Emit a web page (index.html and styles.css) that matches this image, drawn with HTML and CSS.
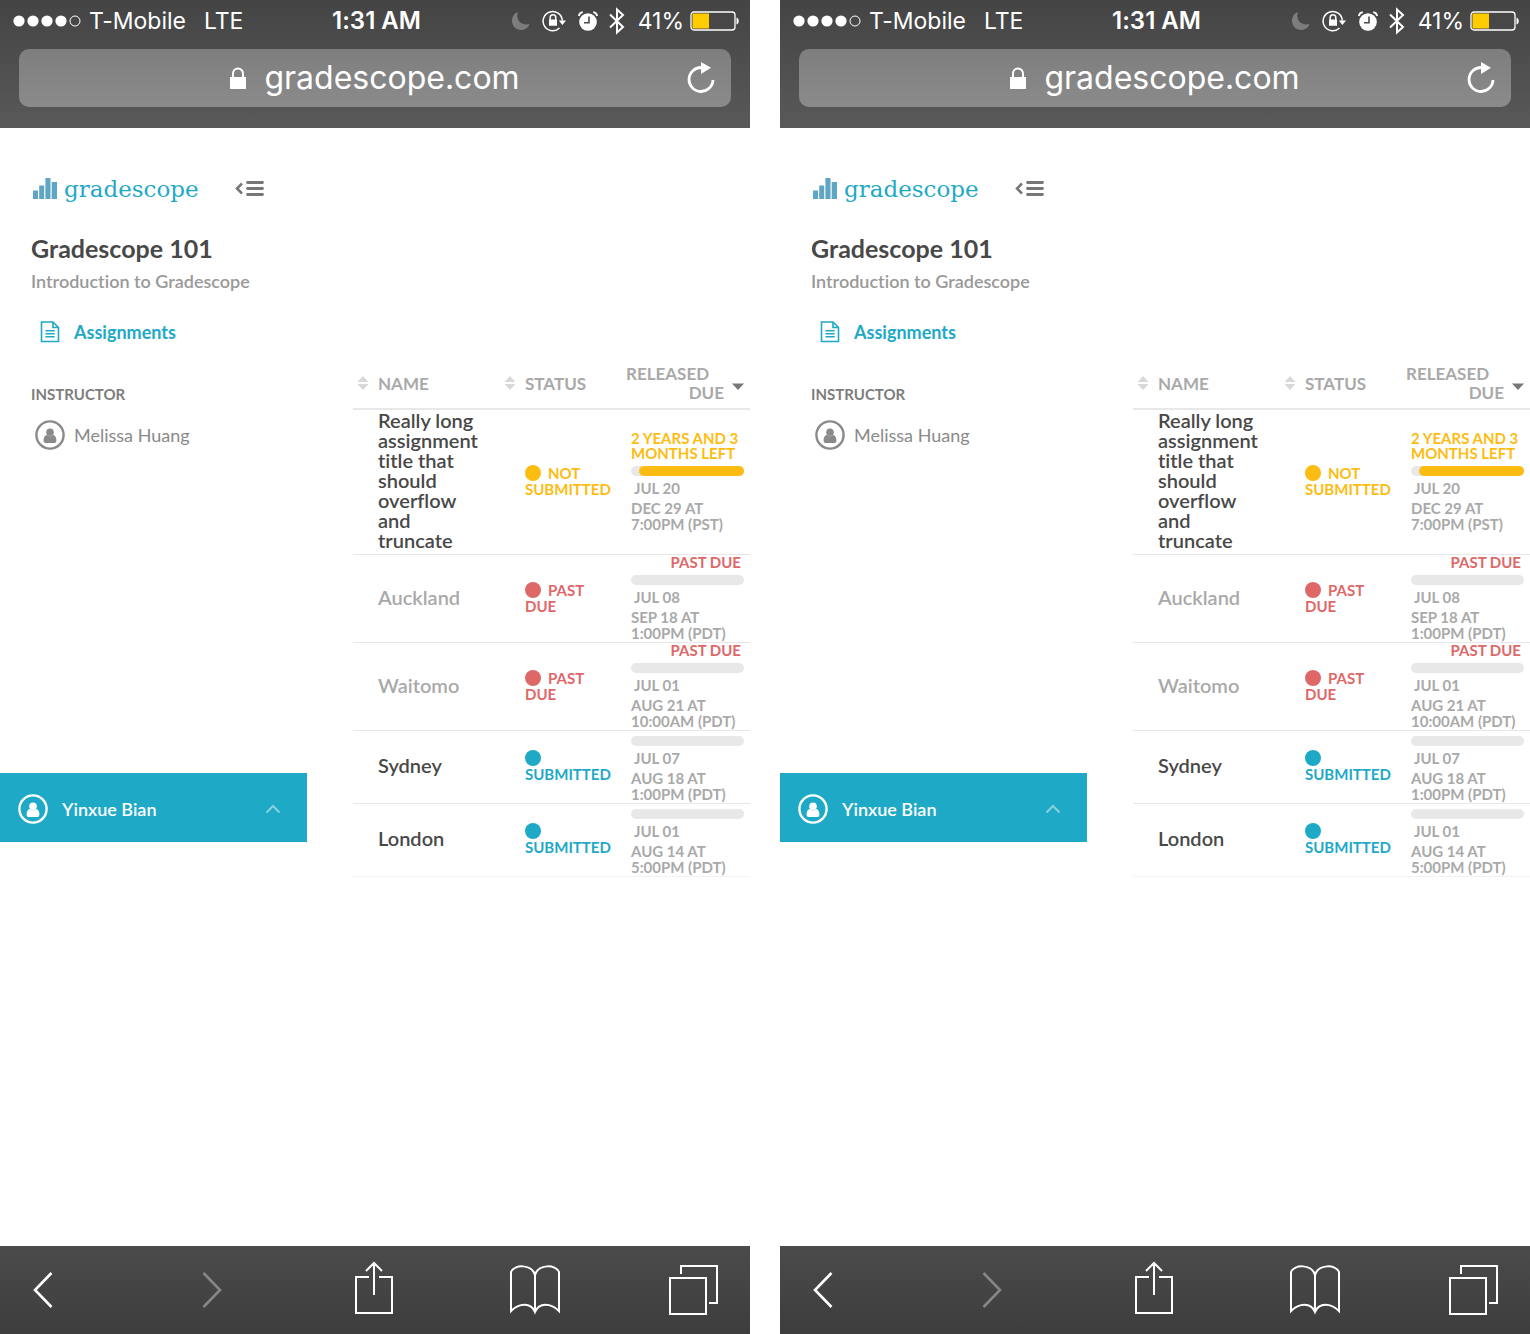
FILE: index.html
```html
<!DOCTYPE html>
<html lang="en">
<head>
<meta charset="utf-8">
<meta name="viewport" content="width=device-width, initial-scale=1">
<title>Gradescope 101</title>
<link rel="stylesheet" href="styles.css">
</head>
<body>
<svg class="sprite" aria-hidden="true">
  <symbol id="signal" viewBox="0 0 68 12"><g fill="#fff"><circle cx="6" cy="6" r="5.6"/><circle cx="20" cy="6" r="5.6"/><circle cx="34" cy="6" r="5.6"/><circle cx="48" cy="6" r="5.6"/></g><circle cx="62" cy="6" r="5" fill="none" stroke="#fff"/></symbol>
  <symbol id="moon" viewBox="0 0 20 20"><path d="M7 1C2.500 2.500 1 6.500 1 10c0 5 4 9 9 9 4 0 7.500-2.500 8.500-6C11 15 4 9.500 7 1z" fill="#7d7d7d"/></symbol>
  <symbol id="rotation" viewBox="0 0 24 22"><g fill="none" stroke="#fff" stroke-width="1.500"><path d="M17.500 18A9.600 9.600 0 1 1 20.300 10.500"/><path d="M8.200 10V7.500a2.800 2.800 0 0 1 5.600 0V10"/></g><path d="M7 9.500h8v6.300H7zM16.800 10.500h7.200l-3.600 4.500z" fill="#fff"/></symbol>
  <symbol id="alarm" viewBox="0 0 20 20"><circle cx="10" cy="11" r="8.800" fill="#fff"/><path d="M11 5.500v6.300H6" fill="none" stroke="#4a4a4a" stroke-width="1.600"/><path d="M.8 5a5 5 0 0 1 4-3.800M15.200 1.200a5 5 0 0 1 4 3.800" fill="none" stroke="#fff" stroke-width="1.800"/></symbol>
  <symbol id="bluetooth" viewBox="0 0 16 28"><path d="M1 7.500l13 12.500-6 5.500V2.500L14 8 1 20.500" fill="none" stroke="#fff" stroke-width="2"/></symbol>
  <symbol id="battery" viewBox="0 0 50 20"><rect x="1" y="1" width="44" height="18" rx="3" fill="none" stroke="#fff" stroke-width="1.300"/><path d="M2.500 2.500H19v15H2.500z" fill="#fc0"/><path d="M46.500 6.500c3 1 3 6 0 7z" fill="#fff"/></symbol>
  <symbol id="lock" viewBox="0 0 16 22"><path d="M0 10h16v12H0z" fill="#fff"/><path d="M3 11V6.500a5 5 0 0 1 10 0V11" fill="none" stroke="#fff" stroke-width="2"/></symbol>
  <symbol id="reload" viewBox="0 0 28 32"><path d="M14.500 5.500A12 12 0 1 0 26 18" fill="none" stroke="#fff" stroke-width="2.800"/><path d="M14 0l10 5.800L14 12z" fill="#fff"/></symbol>
  <symbol id="bars" viewBox="0 0 24 22"><path d="M0 12.500h5v8.500H0zM6.200 7.500h5V21h-5zM12.400 0h5.100v21h-5.100zM18.700 4H24v17h-5.300z" fill="#5ea6c4"/></symbol>
  <symbol id="collapse" viewBox="0 0 30 16"><path d="M7 2.500L2 7.500l5 5" fill="none" stroke="#777" stroke-width="2.500"/><path d="M12.500 1.500h15M12.500 7.500h15M12.500 13.500h15" stroke="#777" stroke-width="2.800" stroke-linecap="round"/></symbol>
  <symbol id="document" viewBox="0 0 20 22"><g fill="none" stroke="#1ea9c6" stroke-width="1.600"><path d="M1.500 1H13l5.500 5.500v14h-17z"/><path d="M13 1v5.500h5.500M5.500 9.700h9.200M5.500 12.700h9.200M5.500 15.700h9.200"/></g></symbol>
  <symbol id="person" viewBox="0 0 30 30"><circle cx="15" cy="15" r="13.600" fill="none" stroke="currentColor" stroke-width="2.400"/><circle cx="15" cy="12.200" r="3.800" fill="currentColor"/><path d="M8.600 20.500c0-4 2-5.500 3.500-5.500 2 1.600 4 1.600 5.800 0 1.500 0 3.500 1.500 3.500 5.500 0 1.700-.8 2.500-2 2.500h-8.800c-1.200 0-2-.8-2-2.500z" fill="currentColor"/></symbol>
  <symbol id="up" viewBox="0 0 16 10"><path d="M1.500 8.500L8 2l6.500 6.500" fill="none" stroke="#8bd0df" stroke-width="2"/></symbol>
  <symbol id="sort" viewBox="0 0 12 14"><path d="M.5 6L6 0l5.500 6zM.5 8h11L6 14z" fill="#d8d8d8"/></symbol>
  <symbol id="sorted" viewBox="0 0 12 8"><path d="M0 .5h12L6 7z" fill="#777"/></symbol>
  <symbol id="back" viewBox="0 0 20 38"><path d="M18.500 2L2 19l16.500 17" fill="none" stroke="currentColor" stroke-width="2.600"/></symbol>
  <symbol id="forward" viewBox="0 0 20 38"><path d="M1.500 2L18 19 1.500 36" fill="none" stroke="currentColor" stroke-width="2.600"/></symbol>
  <symbol id="share" viewBox="0 0 38 60"><path d="M14 17H1v36h36V17H24M19 35V3M11 11l8-8 8 8" fill="none" stroke="#fff" stroke-width="2"/></symbol>
  <symbol id="book" viewBox="0 0 50 50"><path d="M25 47V10C22-1 4-1 1 7v39c8-8 20-9 24 1 4-10 16-9 24-1V7C46-1 28-1 25 10" fill="none" stroke="#fff" stroke-width="2"/></symbol>
  <symbol id="tabs" viewBox="0 0 50 50"><path d="M1 13h36v36H1zM12 9V1h36v37h-8" fill="none" stroke="#fff" stroke-width="2"/></symbol>
</svg>
<main class="gallery">
  <section class="phone">
    <header class="chrome">
      <div class="status-bar">
        <div class="carrier"><svg class="i-signal"><use href="#signal"/></svg><span>T-Mobile</span><span class="network">LTE</span></div>
        <time class="clock">1:31 AM</time>
        <div class="indicators"><svg class="i-moon"><use href="#moon"/></svg><svg class="i-rotation"><use href="#rotation"/></svg><svg class="i-alarm"><use href="#alarm"/></svg><svg class="i-bluetooth"><use href="#bluetooth"/></svg><span class="charge">41%</span><svg class="i-battery"><use href="#battery"/></svg></div>
      </div>
      <div class="address"><span class="site"><svg class="i-lock"><use href="#lock"/></svg>gradescope.com</span><button class="reload" type="button" aria-label="Reload"><svg class="i-reload"><use href="#reload"/></svg></button></div>
    </header>
    <div class="page">
      <aside class="sidebar">
        <div class="course">
          <div class="brand"><a class="logo" href="#"><svg class="i-bars"><use href="#bars"/></svg>gradescope</a><button type="button" aria-label="Collapse menu"><svg class="i-collapse"><use href="#collapse"/></svg></button></div>
          <h1>Gradescope 101</h1>
          <p class="subtitle">Introduction to Gradescope</p>
          <nav><a class="nav-link" href="#"><svg class="i-document"><use href="#document"/></svg>Assignments</a></nav>
          <h2>INSTRUCTOR</h2>
          <p class="instructor"><svg class="i-person"><use href="#person"/></svg>Melissa Huang</p>
        </div>
        <button class="account" type="button"><svg class="i-person"><use href="#person"/></svg><span>Yinxue Bian</span><svg class="i-up"><use href="#up"/></svg></button>
      </aside>
      <table class="assignments">
        <colgroup><col class="col-name"><col class="col-status"><col></colgroup>
        <thead><tr>
          <th scope="col"><span class="heading"><svg class="i-sort"><use href="#sort"/></svg>NAME</span></th>
          <th scope="col"><span class="heading"><svg class="i-sort"><use href="#sort"/></svg>STATUS</span></th>
          <th scope="col"><span class="released">RELEASED</span><span class="due">DUE<svg class="i-sorted"><use href="#sorted"/></svg></span></th>
        </tr></thead>
        <tbody>
          <tr class="open"><th scope="row">Really long assignment title that should overflow and truncate</th><td class="state pending"><i class="dot"></i>NOT SUBMITTED</td><td class="dates"><p class="left">2 YEARS AND 3 MONTHS LEFT</p><div class="track"><div class="fill"></div></div><p class="start">JUL 20</p><p>DEC 29 AT 7:00PM (PST)</p></td></tr>
          <tr class="closed"><th scope="row">Auckland</th><td class="state late"><i class="dot"></i>PAST DUE</td><td class="dates"><p class="over">PAST DUE</p><div class="track"></div><p class="start">JUL 08</p><p>SEP 18 AT 1:00PM (PDT)</p></td></tr>
          <tr class="closed"><th scope="row">Waitomo</th><td class="state late"><i class="dot"></i>PAST DUE</td><td class="dates"><p class="over">PAST DUE</p><div class="track"></div><p class="start">JUL 01</p><p>AUG 21 AT 10:00AM (PDT)</p></td></tr>
          <tr><th scope="row">Sydney</th><td class="state done"><i class="dot"></i>SUBMITTED</td><td class="dates"><div class="track"></div><p class="start">JUL 07</p><p>AUG 18 AT 1:00PM (PDT)</p></td></tr>
          <tr><th scope="row">London</th><td class="state done"><i class="dot"></i>SUBMITTED</td><td class="dates"><div class="track"></div><p class="start">JUL 01</p><p>AUG 14 AT 5:00PM (PDT)</p></td></tr>
        </tbody>
      </table>
    </div>
    <footer class="toolbar">
      <button type="button" aria-label="Back"><svg class="i-arrow"><use href="#back"/></svg></button>
      <button class="forward" type="button" aria-label="Forward" disabled><svg class="i-arrow"><use href="#forward"/></svg></button>
      <button class="share" type="button" aria-label="Share"><svg class="i-share"><use href="#share"/></svg></button>
      <button type="button" aria-label="Bookmarks"><svg class="i-tool"><use href="#book"/></svg></button>
      <button type="button" aria-label="Tabs"><svg class="i-tool"><use href="#tabs"/></svg></button>
    </footer>
  </section>
  <section class="phone">
    <header class="chrome">
      <div class="status-bar">
        <div class="carrier"><svg class="i-signal"><use href="#signal"/></svg><span>T-Mobile</span><span class="network">LTE</span></div>
        <time class="clock">1:31 AM</time>
        <div class="indicators"><svg class="i-moon"><use href="#moon"/></svg><svg class="i-rotation"><use href="#rotation"/></svg><svg class="i-alarm"><use href="#alarm"/></svg><svg class="i-bluetooth"><use href="#bluetooth"/></svg><span class="charge">41%</span><svg class="i-battery"><use href="#battery"/></svg></div>
      </div>
      <div class="address"><span class="site"><svg class="i-lock"><use href="#lock"/></svg>gradescope.com</span><button class="reload" type="button" aria-label="Reload"><svg class="i-reload"><use href="#reload"/></svg></button></div>
    </header>
    <div class="page">
      <aside class="sidebar">
        <div class="course">
          <div class="brand"><a class="logo" href="#"><svg class="i-bars"><use href="#bars"/></svg>gradescope</a><button type="button" aria-label="Collapse menu"><svg class="i-collapse"><use href="#collapse"/></svg></button></div>
          <h1>Gradescope 101</h1>
          <p class="subtitle">Introduction to Gradescope</p>
          <nav><a class="nav-link" href="#"><svg class="i-document"><use href="#document"/></svg>Assignments</a></nav>
          <h2>INSTRUCTOR</h2>
          <p class="instructor"><svg class="i-person"><use href="#person"/></svg>Melissa Huang</p>
        </div>
        <button class="account" type="button"><svg class="i-person"><use href="#person"/></svg><span>Yinxue Bian</span><svg class="i-up"><use href="#up"/></svg></button>
      </aside>
      <table class="assignments">
        <colgroup><col class="col-name"><col class="col-status"><col></colgroup>
        <thead><tr>
          <th scope="col"><span class="heading"><svg class="i-sort"><use href="#sort"/></svg>NAME</span></th>
          <th scope="col"><span class="heading"><svg class="i-sort"><use href="#sort"/></svg>STATUS</span></th>
          <th scope="col"><span class="released">RELEASED</span><span class="due">DUE<svg class="i-sorted"><use href="#sorted"/></svg></span></th>
        </tr></thead>
        <tbody>
          <tr class="open"><th scope="row">Really long assignment title that should overflow and truncate</th><td class="state pending"><i class="dot"></i>NOT SUBMITTED</td><td class="dates"><p class="left">2 YEARS AND 3 MONTHS LEFT</p><div class="track"><div class="fill"></div></div><p class="start">JUL 20</p><p>DEC 29 AT 7:00PM (PST)</p></td></tr>
          <tr class="closed"><th scope="row">Auckland</th><td class="state late"><i class="dot"></i>PAST DUE</td><td class="dates"><p class="over">PAST DUE</p><div class="track"></div><p class="start">JUL 08</p><p>SEP 18 AT 1:00PM (PDT)</p></td></tr>
          <tr class="closed"><th scope="row">Waitomo</th><td class="state late"><i class="dot"></i>PAST DUE</td><td class="dates"><p class="over">PAST DUE</p><div class="track"></div><p class="start">JUL 01</p><p>AUG 21 AT 10:00AM (PDT)</p></td></tr>
          <tr><th scope="row">Sydney</th><td class="state done"><i class="dot"></i>SUBMITTED</td><td class="dates"><div class="track"></div><p class="start">JUL 07</p><p>AUG 18 AT 1:00PM (PDT)</p></td></tr>
          <tr><th scope="row">London</th><td class="state done"><i class="dot"></i>SUBMITTED</td><td class="dates"><div class="track"></div><p class="start">JUL 01</p><p>AUG 14 AT 5:00PM (PDT)</p></td></tr>
        </tbody>
      </table>
    </div>
    <footer class="toolbar">
      <button type="button" aria-label="Back"><svg class="i-arrow"><use href="#back"/></svg></button>
      <button class="forward" type="button" aria-label="Forward" disabled><svg class="i-arrow"><use href="#forward"/></svg></button>
      <button class="share" type="button" aria-label="Share"><svg class="i-share"><use href="#share"/></svg></button>
      <button type="button" aria-label="Bookmarks"><svg class="i-tool"><use href="#book"/></svg></button>
      <button type="button" aria-label="Tabs"><svg class="i-tool"><use href="#tabs"/></svg></button>
    </footer>
  </section>
</main>
</body>
</html>
```
FILE: styles.css
```css
* { box-sizing: border-box; }
body { margin: 0; background: #fff; font-family: Lato, "Open Sans", sans-serif; font-variant-ligatures: none; color: #484848; }
h1, h2, p { margin: 0; }
a { color: inherit; text-decoration: none; }
button { border: 0; padding: 0; background: none; color: inherit; font: inherit; display: flex; align-items: center; }
svg { display: block; flex: none; }
.sprite { display: none; }

.gallery { display: grid; grid-template-columns: 1fr 1fr; gap: 30px; min-height: 100vh; }
.phone { display: flex; flex-direction: column; min-width: 0; }

/* Browser chrome */
.chrome { padding-bottom: 21px; background: linear-gradient(#444, #595959); color: #fff; font-family: Inter, sans-serif; }
.status-bar { display: grid; grid-template-columns: 1fr auto 1fr; align-items: center; height: 41px; margin-bottom: 8px; padding: 0 10px 0 13px; font-size: 23px; line-height: 28px; }
.carrier, .indicators { display: flex; align-items: center; white-space: nowrap; }
.carrier { gap: 8px; }
.network { padding-left: 10px; }
.clock { font-size: 24px; font-weight: 600; }
.indicators { justify-content: flex-end; }
.i-signal { width: 68px; height: 12px; }
.i-moon { width: 20px; height: 20px; margin-right: 11px; }
.i-rotation { width: 24px; height: 22px; margin-right: 12px; }
.i-alarm { width: 20px; height: 20px; margin-right: 11px; }
.i-bluetooth { width: 16px; height: 28px; margin-right: 13px; }
.i-battery { width: 50px; height: 20px; margin-left: 6px; }
.address { display: grid; grid-template-columns: 28px 1fr 28px; align-items: center; height: 58px; margin: 0 19px; padding: 0 16px; border-radius: 10px; background: linear-gradient(#7e7e7e, #8b8b8b); font-size: 32px; line-height: 38px; }
.site { grid-column: 2; display: flex; align-items: center; justify-content: center; gap: 18px; }
.i-lock { width: 16px; height: 22px; }
.i-reload { width: 28px; height: 32px; }

/* Course page */
.page { flex: 1; display: grid; grid-template-columns: 307px 1fr; gap: 46px; align-items: start; }
.course { padding: 48px 31px 323px; }
.brand { display: flex; justify-content: space-between; align-items: center; height: 26px; padding-right: 11px; }
.logo { display: flex; align-items: center; gap: 7px; color: #1ea9c6; font: 23px/28px "DejaVu Serif", serif; }
.i-bars { width: 24px; height: 22px; margin-left: 2px; }
.i-collapse { width: 30px; height: 16px; }
h1 { margin-top: 30px; font-size: 25px; line-height: 32px; font-weight: 700; white-space: nowrap; }
.subtitle { margin-top: 7px; color: #999; font-size: 18px; line-height: 20px; font-weight: 600; white-space: nowrap; }
.nav-link { display: flex; align-items: center; gap: 14px; margin: 30px 0 0 9px; color: #1ea9c6; font-size: 18px; line-height: 22px; font-weight: 700; }
.i-document { width: 20px; height: 22px; }
h2 { margin-top: 41px; color: #7d7d7d; font-size: 15px; line-height: 20px; font-weight: 700; }
.instructor { display: flex; align-items: center; gap: 9px; margin: 16px 0 0 4px; color: #8a8a8a; font-size: 18px; line-height: 30px; }
.i-person { width: 30px; height: 30px; }
.account { width: 100%; height: 69px; gap: 14px; padding: 3px 26px 0 18px; background: #1ea9c6; color: #fff; font-size: 18px; line-height: 22px; font-weight: 600; }
.i-up { width: 16px; height: 10px; margin-left: auto; }

/* Assignment list */
.assignments { width: 100%; margin-top: 236px; border-collapse: separate; border-spacing: 0; table-layout: fixed; text-align: left; }
.col-name { width: 147px; }
.col-status { width: 125px; }
th, td { padding: 0 0 0 25px; border-bottom: 1px solid #e8e8e8; }
thead th { height: 46px; padding: 0 0 6px 4px; border-bottom-width: 2px; color: #a9a9a9; font-size: 17px; line-height: 19px; font-weight: 700; }
thead th:last-child { padding-left: 1px; }
.heading { display: flex; align-items: center; gap: 9px; }
.i-sort { width: 12px; height: 14px; }
.released { display: block; }
.due { display: flex; align-items: flex-start; justify-content: flex-end; gap: 8px; padding-right: 6px; }
.i-sorted { width: 12px; height: 8px; }
tbody th { padding-right: 16px; padding-bottom: 4px; font-size: 20px; line-height: 20px; font-weight: 600; }
.open th, .open td { height: 145px; }
.closed th { color: #a9a9a9; }
tbody tr:last-child > * { border-color: #f3f3f3; }
.state { padding-right: 12px; padding-bottom: 2px; font-size: 15px; line-height: 16px; font-weight: 700; }
.dot { display: inline-block; width: 16px; height: 16px; margin-right: 7px; border-radius: 50%; background: currentColor; vertical-align: top; }
.pending, .left { color: #fdbc11; }
.late, .over { color: #de6868; }
.done { color: #1ea9c6; }
.dates { padding: 0 6px 1px; color: #a9a9a9; font-size: 15px; line-height: 16px; font-weight: 700; }
.left, .over { line-height: 15px; }
.over { padding-right: 3px; text-align: right; }
.track { height: 10px; margin: 5px 0 4px; border-radius: 5px; background: #e8e8e8; }
.fill { width: 93%; height: 100%; margin-left: auto; border-radius: 5px; background: #fdbc11; }
.start { margin-bottom: 4px; padding-left: 3px; }

/* Browser toolbar */
.toolbar { display: flex; justify-content: space-between; align-items: center; height: 88px; padding: 0 31px 0 33px; background: linear-gradient(#4b4b4b, #3d3d3d); color: #fff; }
.toolbar button { width: 50px; }
.toolbar .forward { justify-content: center; padding-right: 10px; color: #868686; }
.toolbar .share { justify-content: center; padding-right: 4px; }
.i-arrow { width: 20px; height: 38px; }
.i-share { width: 38px; height: 60px; }
.i-tool { width: 50px; height: 50px; }
```
